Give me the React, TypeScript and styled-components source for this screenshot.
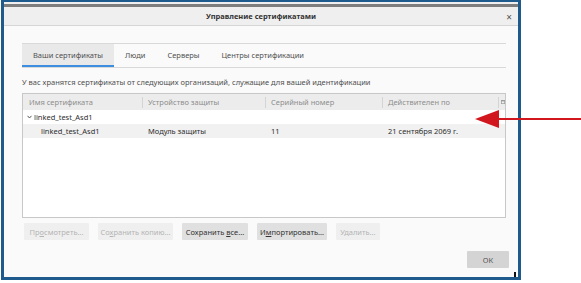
import React from 'react';
import styled, { createGlobalStyle } from 'styled-components';

const GlobalStyle = createGlobalStyle`
  html, body {
    margin: 0;
    padding: 0;
    background: #ffffff;
  }
  body {
    font-family: "Noto Sans", "Open Sans", sans-serif;
    font-size: 7.5px;
    color: #3c3c3c;
  }
`;

const Page = styled.div`
  position: relative;
  width: 581px;
  height: 283px;
  overflow: hidden;
`;

const Window = styled.div`
  position: relative;
  margin-left: 1px;
  width: 520px;
  height: 280px;
  box-sizing: border-box;
  border: 3px solid #1f5a8d;
  border-top-width: 2px;
  background: #fafafa;
  display: flex;
  flex-direction: column;
`;

const TitleArea = styled.div`
  background: #efefef;
  padding-top: 2px;
  border-bottom: 1px solid #d6d6d6;
`;

const ShadowStrip = styled.div`
  height: 3px;
  background: #7d7d7d;
`;

const TitleBar = styled.div`
  position: relative;
  height: 18px;
  display: flex;
  align-items: center;
  justify-content: center;
  font-size: 7.5px;
  font-weight: bold;
  color: #333;
`;

const CloseButton = styled.span`
  position: absolute;
  right: 6px;
  top: 3px;
  font-size: 10px;
  font-weight: normal;
  color: #555;
`;

const Body = styled.div`
  flex: 1;
  display: flex;
  flex-direction: column;
  padding: 17px 9px 0 18px;
`;

const Section = styled.div`
  margin-right: 3px;
  display: flex;
  flex-direction: column;
`;

const TabBar = styled.div`
  height: 25px;
  box-sizing: border-box;
  border-top: 1px solid #d9d9d9;
  border-bottom: 1px solid #d9d9d9;
  display: flex;
`;

const Tab = styled.div<{ $active?: boolean }>`
  display: flex;
  align-items: center;
  padding: 0 11px;
  color: #505050;
  box-sizing: border-box;
  background: ${p => (p.$active ? '#e9e9e9' : 'transparent')};
  border-bottom: 2px solid ${p => (p.$active ? '#3d8ee0' : 'transparent')};
`;

const Description = styled.div`
  margin: 8px 0 5px;
  line-height: 12px;
  color: #505050;
`;

const Table = styled.div`
  height: 125px;
  box-sizing: border-box;
  border: 1px solid #c8c8c8;
  background: #ffffff;
  display: flex;
  flex-direction: column;
`;

const Row = styled.div<{ $header?: boolean; $shaded?: boolean }>`
  display: grid;
  grid-template-columns: 119px 123px 117px 116px 1fr;
  height: ${p => (p.$header ? '16px' : '14px')};
  align-items: center;
  background: ${p => (p.$header ? '#ececec' : p.$shaded ? '#f1f1f1' : '#ffffff')};
  color: ${p => (p.$header ? '#8c8c8c' : '#2e2e2e')};
`;

const Cell = styled.div<{ $sep?: boolean; $indent?: number }>`
  padding-left: ${p => 5 + (p.$indent ?? 0)}px;
  white-space: nowrap;
  overflow: hidden;
  height: 11px;
  line-height: 11px;
  display: flex;
  align-items: center;
  border-left: 1px solid ${p => (p.$sep ? '#d4d4d4' : 'transparent')};
`;

const Chevron = styled.svg`
  margin-right: 2px;
`;

const ButtonRow = styled.div`
  margin: 5px 0 0 2px;
  display: flex;
  gap: 9px;
`;

const Button = styled.button<{ $disabled?: boolean; $width?: number }>`
  width: ${p => (p.$width ? `${p.$width}px` : 'auto')};
  height: 17px;
  padding: 0;
  border: none;
  border-radius: 1px;
  font-family: inherit;
  font-size: 7.5px;
  white-space: nowrap;
  background: ${p => (p.$disabled ? '#efefef' : '#e0e0e0')};
  color: ${p => (p.$disabled ? '#b4b4b4' : '#333')};
`;

const Footer = styled.div`
  margin-top: 11px;
  display: flex;
  justify-content: flex-end;
`;

const OkButton = styled(Button)`
  background: #d4d4d4;
  color: #555;
`;

const Grip = styled.div`
  position: absolute;
  right: 2px;
  bottom: 0;
  width: 2px;
  height: 5px;
  background: #111;
`;

const Arrow = styled.svg`
  position: absolute;
  left: 475px;
  top: 109px;
`;

const columns = ['Имя сертификата', 'Устройство защиты', 'Серийный номер', 'Действителен по'];

const U = ({ children }: { children: React.ReactNode }) => <u>{children}</u>;

export default function App() {
  return (
    <Page>
      <GlobalStyle />
      <Window>
        <TitleArea>
          <ShadowStrip />
          <TitleBar>
            Управление сертификатами
            <CloseButton>×</CloseButton>
          </TitleBar>
        </TitleArea>
        <Body>
          <Section>
            <TabBar>
              <Tab $active>Ваши сертификаты</Tab>
              <Tab>Люди</Tab>
              <Tab>Серверы</Tab>
              <Tab>Центры сертификации</Tab>
            </TabBar>
            <Description>
              У вас хранятся сертификаты от следующих организаций, служащие для вашей идентификации
            </Description>
            <Table>
              <Row $header>
                {columns.map((c, i) => (
                  <Cell key={c} $sep={i > 0}>{c}</Cell>
                ))}
                <Cell $sep style={{ paddingLeft: 2 }}>
                  <svg width="6" height="6" viewBox="0 0 6 6">
                    <rect x="0.5" y="0.5" width="5" height="5" fill="none" stroke="#9a9a9a" />
                    <rect x="0" y="0" width="6" height="2" fill="#9a9a9a" />
                  </svg>
                </Cell>
              </Row>
              <Row>
                <Cell style={{ paddingLeft: 3 }}>
                  <Chevron width="5" height="4" viewBox="0 0 5 4">
                    <path d="M0.5 0.8 L2.5 3 L4.5 0.8" fill="none" stroke="#444" strokeWidth="0.9" />
                  </Chevron>
                  linked_test_Asd1
                </Cell>
              </Row>
              <Row $shaded>
                <Cell $indent={12}>linked_test_Asd1</Cell>
                <Cell>Модуль защиты</Cell>
                <Cell>11</Cell>
                <Cell>21 сентября 2069 г.</Cell>
              </Row>
            </Table>
            <ButtonRow>
              <Button $disabled $width={65}>Пр<U>о</U>смотреть...</Button>
              <Button $disabled $width={75}>Со<U>х</U>ранить копию...</Button>
              <Button $width={66}>Сохранить <U>в</U>се...</Button>
              <Button $width={70}>И<U>м</U>портировать...</Button>
              <Button $disabled $width={44}>У<U>д</U>алить...</Button>
            </ButtonRow>
          </Section>
          <Footer>
            <OkButton $width={42}>ОК</OkButton>
          </Footer>
        </Body>
        <Grip />
      </Window>
      <Arrow width="106" height="20" viewBox="0 0 106 20">
        <polygon points="0,10 24,1 24,19" fill="#d2161e" />
        <rect x="23" y="9" width="83" height="2" fill="#d2161e" />
      </Arrow>
    </Page>
  );
}
